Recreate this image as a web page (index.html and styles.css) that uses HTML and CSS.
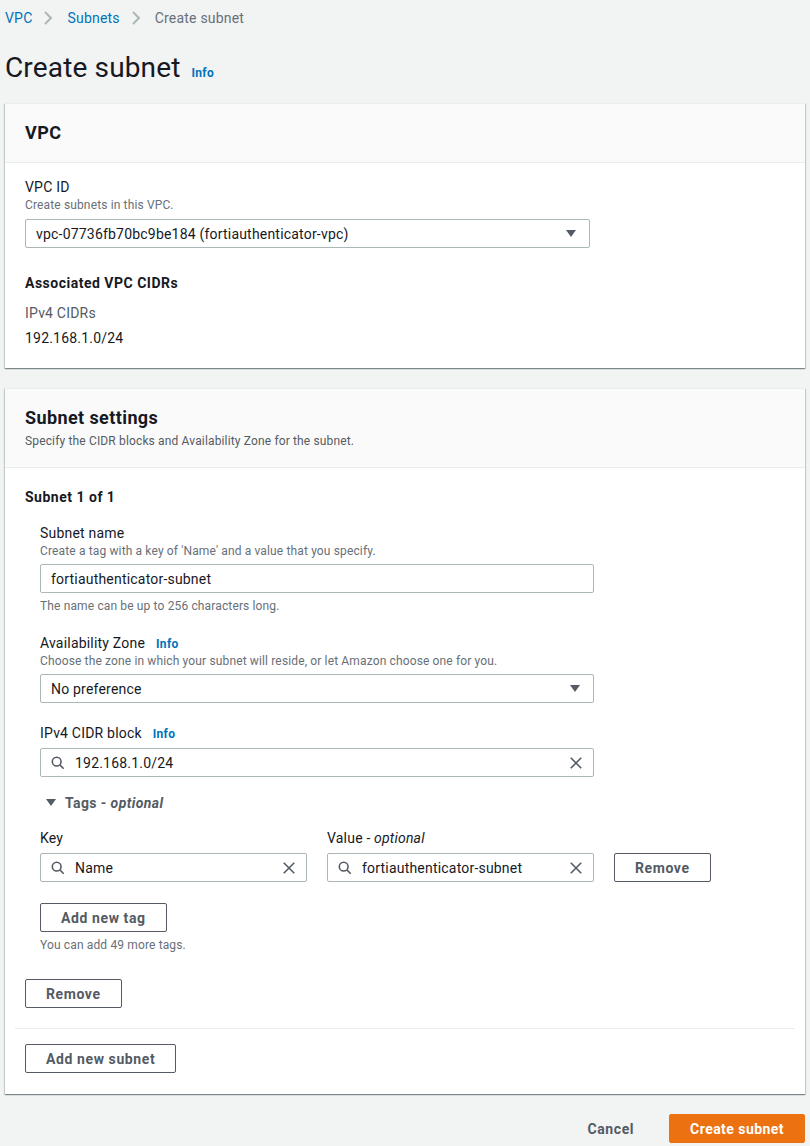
FILE: index.html
```html
<!DOCTYPE html>
<html lang="en">
<head>
<meta charset="utf-8">
<title>Create subnet</title>
<link rel="stylesheet" href="styles.css">
</head>
<body>
<div class="page">
  <nav class="crumbs">
    <a class="link">VPC</a>
    <svg class="chev" viewBox="0 0 16 16"><path d="M5 2l6 6-6 6"/></svg>
    <a class="link">Subnets</a>
    <svg class="chev" viewBox="0 0 16 16"><path d="M5 2l6 6-6 6"/></svg>
    <span class="crumb-cur">Create subnet</span>
  </nav>

  <header class="page-head">
    <h1 class="title">Create subnet</h1>
    <a class="info">Info</a>
  </header>

  <section class="card">
    <div class="card-head">
      <h2 class="card-title">VPC</h2>
    </div>
    <div class="card-body">
      <div class="label">VPC ID</div>
      <div class="desc">Create subnets in this VPC.</div>
      <div class="control select wide">
        <span class="value">vpc-07736fb70bc9be184 (fortiauthenticator-vpc)</span>
        <svg class="caret" viewBox="0 0 16 16"><path d="M3 4h10l-5 7z"/></svg>
      </div>
      <h3 class="sub">Associated VPC CIDRs</h3>
      <div class="kv-key">IPv4 CIDRs</div>
      <div class="kv-val">192.168.1.0/24</div>
    </div>
  </section>

  <section class="card gap">
    <div class="card-head">
      <h2 class="card-title">Subnet settings</h2>
      <div class="head-desc">Specify the CIDR blocks and Availability Zone for the subnet.</div>
    </div>
    <div class="card-body body2">
      <h3 class="sub first">Subnet 1 of 1</h3>
      <div class="subnet">
        <div class="field f1">
          <div class="label">Subnet name</div>
          <div class="desc">Create a tag with a key of 'Name' and a value that you specify.</div>
          <div class="control med"><span class="value">fortiauthenticator-subnet</span></div>
          <div class="desc hint">The name can be up to 256 characters long.</div>
        </div>
        <div class="field f2">
          <div class="label">Availability Zone<a class="info">Info</a></div>
          <div class="desc">Choose the zone in which your subnet will reside, or let Amazon choose one for you.</div>
          <div class="control select med">
            <span class="value">No preference</span>
            <svg class="caret" viewBox="0 0 16 16"><path d="M3 4h10l-5 7z"/></svg>
          </div>
        </div>
        <div class="field f3">
          <div class="label">IPv4 CIDR block<a class="info">Info</a></div>
          <div class="control search med">
            <svg class="mag" viewBox="0 0 16 16"><circle cx="6.5" cy="6.5" r="5"/><path d="M10.2 10.2L14.5 14.5"/></svg>
            <span class="value">192.168.1.0/24</span>
            <svg class="clear" viewBox="0 0 16 16"><path d="M2 2l12 12M14 2L2 14"/></svg>
          </div>
        </div>
        <div class="tags-head">
          <svg class="expand" viewBox="0 0 16 16"><path d="M3 4h10l-5 7z"/></svg>
          <span>Tags - <em>optional</em></span>
        </div>
        <div class="tag-row">
          <div class="tag-col">
            <div class="label">Key</div>
            <div class="control search">
              <svg class="mag" viewBox="0 0 16 16"><circle cx="6.5" cy="6.5" r="5"/><path d="M10.2 10.2L14.5 14.5"/></svg>
              <span class="value">Name</span>
              <svg class="clear" viewBox="0 0 16 16"><path d="M2 2l12 12M14 2L2 14"/></svg>
            </div>
          </div>
          <div class="tag-col">
            <div class="label">Value - <em>optional</em></div>
            <div class="control search">
              <svg class="mag" viewBox="0 0 16 16"><circle cx="6.5" cy="6.5" r="5"/><path d="M10.2 10.2L14.5 14.5"/></svg>
              <span class="value">fortiauthenticator-subnet</span>
              <svg class="clear" viewBox="0 0 16 16"><path d="M2 2l12 12M14 2L2 14"/></svg>
            </div>
          </div>
          <button class="btn">Remove</button>
        </div>
        <button class="btn add-tag">Add new tag</button>
        <div class="desc hint">You can add 49 more tags.</div>
      </div>
      <button class="btn remove-subnet">Remove</button>
      <hr class="divider">
      <button class="btn add-subnet">Add new subnet</button>
    </div>
  </section>

  <footer class="actions">
    <button class="btn link-btn">Cancel</button>
    <button class="btn primary">Create subnet</button>
  </footer>
</div>
</body>
</html>
```

FILE: styles.css
```css
* { box-sizing: border-box; }

html, body {
  margin: 0;
  padding: 0;
  background: #f2f3f3;
}

body {
  font-family: Roboto, "Liberation Sans", sans-serif;
  font-size: 14px;
  line-height: 20px;
  letter-spacing: 0.2px;
  color: #16191f;
}

.page {
  padding: 0 5px;
  width: 810px;
}

/* breadcrumbs */
.crumbs {
  display: flex;
  align-items: center;
  height: 36px;
  gap: 8px;
}
.link {
  color: #0073bb;
  text-decoration: none;
}
.chev {
  width: 16px;
  height: 16px;
  fill: none;
  stroke: #aab7b8;
  stroke-width: 2;
  margin-right: 3px;
}
.crumb-cur {
  color: #687078;
}

/* page header */
.page-head {
  display: flex;
  align-items: baseline;
  margin-top: 14px;
  height: 36px;
}
.title {
  margin: 0;
  font-size: 28px;
  font-weight: 400;
  line-height: 36px;
  letter-spacing: 0.15px;
  color: #16191f;
}
.info {
  color: #0073bb;
  font-size: 12px;
  font-weight: 700;
  line-height: 16px;
  letter-spacing: 0.3px;
  margin-left: 11px;
}

/* cards */
.card {
  margin-top: 17px;
  background: #fff;
  border-top: 1px solid #eaeded;
  box-shadow: 0 1px 1px 0 rgba(0, 28, 36, 0.3),
              1px 1px 1px 0 rgba(0, 28, 36, 0.15),
              -1px 1px 1px 0 rgba(0, 28, 36, 0.15);
}
.card.gap {
  margin-top: 20px;
}
.card-head {
  background: #fafafa;
  border-bottom: 1px solid #eaeded;
  padding: 18px 20px 18px;
}
.card-title {
  margin: 0;
  font-size: 18px;
  font-weight: 700;
  line-height: 22px;
  letter-spacing: 0.4px;
}
.head-desc {
  margin-top: 4px;
  font-size: 12px;
  line-height: 16px;
  letter-spacing: 0.15px;
  color: #545b64;
}
.card-body {
  padding: 14px 20px 20px;
}
.body2 {
  padding-top: 19px;
  padding-bottom: 21px;
}

.label {
  display: flex;
  align-items: baseline;
  height: 20px;
  line-height: 20px;
  color: #16191f;
}
.label em {
  margin-left: 0.25em;
}
.desc {
  font-size: 12px;
  line-height: 16px;
  letter-spacing: 0.14px;
  color: #687078;
}
.hint {
  margin-top: 5px;
}

.sub {
  margin: 25px 0 0;
  font-size: 14px;
  font-weight: 700;
  line-height: 20px;
  letter-spacing: 0.5px;
}
.sub.first {
  margin-top: 0;
}
.kv-key {
  margin-top: 10px;
  color: #545b64;
}
.kv-val {
  margin-top: 5px;
}

/* controls */
.control {
  display: flex;
  align-items: center;
  height: 29px;
  margin-top: 6px;
  padding: 0 10px;
  background: #fff;
  border: 1px solid #aab7b8;
  border-radius: 2px;
  color: #16191f;
}
.control .value {
  flex: 1;
  white-space: nowrap;
}
.wide { width: 565px; }
.med { width: 554px; }

.caret {
  width: 16px;
  height: 16px;
  fill: #545b64;
}
.mag, .clear {
  width: 14px;
  height: 14px;
  fill: none;
  stroke: #545b64;
  stroke-width: 1.8;
}
.mag {
  margin-right: 10px;
}

/* subnet block */
.subnet {
  padding-left: 15px;
}
.subnet .control {
  margin-top: 5px;
}
.f1 { margin-top: 16px; }
.f2 { margin-top: 19px; }
.f3 { margin-top: 20px; }

.tags-head {
  display: flex;
  align-items: center;
  margin-top: 16px;
  font-weight: 700;
  letter-spacing: 0.4px;
  color: #545b64;
}
.expand {
  width: 16px;
  height: 16px;
  fill: #545b64;
  margin-left: 3px;
  margin-right: 6px;
}
.tags-head em {
  font-style: italic;
}

.tag-row {
  display: flex;
  align-items: flex-end;
  gap: 20px;
  margin-top: 15px;
}
.tag-col {
  width: 267px;
}

/* buttons */
.btn {
  height: 29px;
  padding: 0 20px;
  background: #fff;
  border: 1px solid #545b64;
  border-radius: 2px;
  font-family: inherit;
  font-size: 14px;
  font-weight: 700;
  letter-spacing: 0.6px;
  color: #545b64;
  line-height: 20px;
  cursor: pointer;
}
.add-tag {
  display: block;
  margin-top: 21px;
}
.remove-subnet {
  display: block;
  margin-top: 26px;
}
.divider {
  margin: 20px -10px 0;
  border: 0;
  border-top: 1px solid #eaeded;
  height: 0;
}
.add-subnet {
  display: block;
  margin-top: 15px;
}

/* footer */
.actions {
  display: flex;
  justify-content: flex-end;
  gap: 14px;
  margin-top: 20px;
}
.link-btn {
  border-color: transparent;
  background: transparent;
}
.primary {
  background: #ec7211;
  border-color: #ec7211;
  color: #fff;
  letter-spacing: 0.45px;
}
```
